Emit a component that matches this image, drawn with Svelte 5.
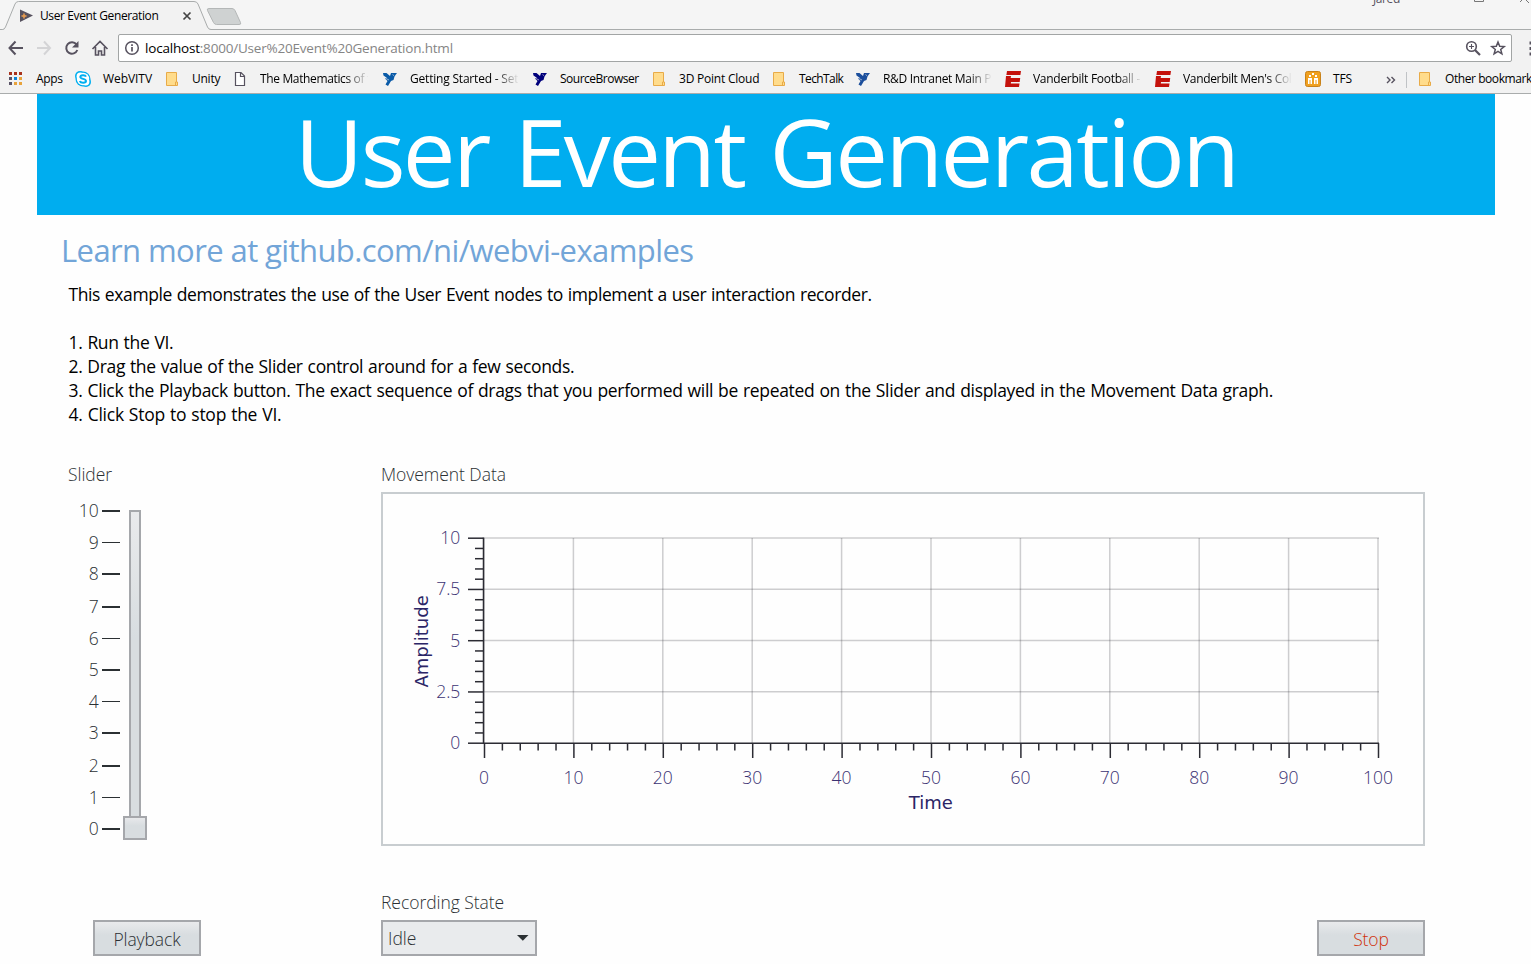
<script>
  const bookmarks = [
    { icon: 'apps', text: 'Apps', ls: -0.3 },
    { icon: 'skype', text: 'WebVITV', ls: -0.06 },
    { icon: 'folder', text: 'Unity', ls: -0.25 },
    { icon: 'doc', text: 'The Mathematics of f', fade: true, ls: -0.36 },
    { icon: 'ni', color: '#0a5ba8', text: 'Getting Started - Set', fade: true, ls: -0.2 },
    { icon: 'ni', color: '#00007c', text: 'SourceBrowser', ls: -0.5 },
    { icon: 'folder', text: '3D Point Cloud', ls: -0.22 },
    { icon: 'folder', text: 'TechTalk', ls: -0.6 },
    { icon: 'ni', color: '#1c4f9c', text: 'R&D Intranet Main P', fade: true, ls: -0.32 },
    { icon: 'espn', text: 'Vanderbilt Football -', fade: true, ls: -0.28 },
    { icon: 'espn', text: "Vanderbilt Men's Col", fade: true, ls: -0.33 },
    { icon: 'tfs', text: 'TFS', ls: -0.13 }
  ];
  const steps = [
    { t: 'This example demonstrates the use of the User Event nodes to implement a user interaction recorder.', ls: -0.4 },
    { t: '\u00a0', ls: -0.3 },
    { t: '1. Run the VI.', ls: -0.32 },
    { t: '2. Drag the value of the Slider control around for a few seconds.', ls: -0.34 },
    { t: '3. Click the Playback button. The exact sequence of drags that you performed will be repeated on the Slider and displayed in the Movement Data graph.', ls: -0.31 },
    { t: '4. Click Stop to stop the VI.', ls: -0.24 }
  ];
  const sliderTicks = [
    [10, 511, 2], [9, 542.5, 1], [8, 574, 2], [7, 607, 2], [6, 638.5, 1], [5, 670, 2],
    [4, 701.5, 1], [3, 733, 2], [2, 766, 2], [1, 797.5, 1], [0, 829, 2]
  ];
  const xs = Array.from({ length: 51 }, (_, i) => i);
  const ys = Array.from({ length: 21 }, (_, i) => i);
  const yLabels = ['0', '2.5', '5', '7.5', '10'];
</script>

{#snippet icon(kind, color)}
  <svg class="bicon" width="16" height="16" viewBox="0 0 16 16">
    {#if kind === 'apps'}
      {#each [['#a8321c', '#a8321c', '#a8321c'], ['#5a5468', '#0a84d8', '#e8a33c'], ['#5a5468', '#e8a33c', '#e8a33c']] as row, r}
        {#each row as c, i}<rect x={1 + i * 5} y={1 + r * 5} width="3" height="3" fill={c} />{/each}
      {/each}
    {:else if kind === 'skype'}
      <circle cx="5" cy="5" r="5" fill="#00aff0" /><circle cx="11" cy="11" r="5" fill="#00aff0" /><circle cx="8" cy="8" r="7.500" fill="#00aff0" />
      <circle cx="5.300" cy="5.300" r="3.700" fill="#fff" /><circle cx="10.700" cy="10.700" r="3.700" fill="#fff" /><circle cx="8" cy="8" r="6.200" fill="#fff" />
      <path d="M11 5.600C10.300 3.600 5.300 3.700 5.300 6c0 2.200 5.700 1.600 5.700 4 0 2.400-5.400 2.400-6.100 0" fill="none" stroke="#00aff0" stroke-width="2" />
    {:else if kind === 'folder'}
      <path d="M2.500 1.500h10v9.500h1v3.500h-11z" fill="#ffdc8c" stroke="#e8ab48" /><path d="M11.500 14v-3h1" fill="none" stroke="#e8ab48" />
    {:else if kind === 'doc'}
      <path d="M3.500 1.500h5.500l3.500 3.500v9.500h-9zM8.500 1.500v4h4" fill="#fff" stroke="#57525f" stroke-width="1.200" />
    {:else if kind === 'ni'}
      <path d="M1 2h3.500l3.500 3 1-3h6l-1.500 2-1 1.500-1 3.500-2.500 1-3 5-2.500-1.500 2-3.500-1.500-1.500-1-1 2-.5L1.500 4.500z" fill={color} /><path d="M10.500 3.500l1.500 1.200M4 7.500l3 1.500" stroke="#f2f2f2" stroke-width=".6" />
    {:else if kind === 'espn'}
      <path d="M2 0h14l-.6 4H1.400zM1 5h5l-.3 2h9.500l-.5 4H6l-.2 1.500h8.700L14 16H0z" fill="#c4120c" />
    {:else}
      <rect x=".5" y=".5" width="15" height="15" rx="2" fill="#f0a020" stroke="#c8821a" />
      <path d="M4 4h2v2H4zM10 4h2v2h-2zM7 2h2v2H7zM3 7h4v6H3zM9 7h4v6H9z" fill="#fff" /><path d="M5 9v4M11 9v4M7 5l1 1 1-1" stroke="#f0a020" fill="none" />
    {/if}
  </svg>
{/snippet}

<div class="window">
  <header class="tabs">
    <svg width="250" height="30" viewBox="0 0 250 30">
      <path d="M0 29.500H2.500Q4.500 29.500 5.500 27L15 4Q16 1.500 18.500 1.500H194Q197 1.500 198 4L207.500 27Q208.500 29.500 211 29.500H250V30H0z" fill="#f2f2f2" />
      <path d="M0 29.500H2.500Q4.500 29.500 5.500 27L15 4Q16 1.500 18.500 1.500H194Q197 1.500 198 4L207.500 27Q208.500 29.500 211 29.500H250" fill="none" stroke="#a9acac" />
      <path d="M209 8.500H232Q234 8.500 235 10.500L240.500 22.500Q241.500 24.500 239 24.500H216.500Q214.500 24.500 213.500 22.500L207.500 10.500Q206.500 8.500 209 8.500z" fill="#cfd2d2" stroke="#b4b7b7" />
      <path d="M20 9.500L33 15.500 20 22z" fill="#57525f" /><path d="M21.500 16h5M24 13.500v5" stroke="#f0a050" stroke-width="1.500" />
      <path d="M183.500 12.500l7 7m0-7l-7 7" stroke="#444" stroke-width="1.700" />
    </svg>
    <span class="tabtitle">User Event Generation</span>
    <span class="profile">Jared</span>
    <svg class="winctl" width="60" height="4" viewBox="0 0 60 4"><path d="M3.500 0v1.500h9V0M49 2l4-4 5 5" fill="none" stroke="#777" /></svg>
  </header>
  <div class="toolbar">
    <svg width="118" height="36" viewBox="0 30 118 36" fill="none" stroke="#57525f" stroke-width="2">
      <path d="M9.500 48H23M15.500 41.500L9.500 48l6 6.500" />
      <path d="M37 48h12.500M44 41.500l6 6.500-6 6.500" stroke="#d4d4d6" />
      <path d="M76.500 44.500A5.700 5.700 0 1 0 77.300 50" /><path d="M78.500 41v6.500H72z" fill="#57525f" stroke="none" />
      <path d="M92.500 49l7.500-7.500 7.500 7.500M95.500 47v8h3v-4h3v4h3v-8" stroke-width="1.600" />
    </svg>
    <div class="omni">
      <svg width="26" height="26" viewBox="0 0 26 26"><circle cx="13" cy="13" r="6.300" fill="none" stroke="#57525f" stroke-width="1.500" /><path d="M13 12v4.500M13 9.200v1.800" stroke="#57525f" stroke-width="1.700" /></svg>
      <span class="url"><b>localhost</b>:8000/User%20Event%20Generation.html</span>
      <svg class="end" width="49" height="26" viewBox="0 0 49 26" fill="none" stroke="#57525f" stroke-width="1.600">
        <circle cx="9.500" cy="11.500" r="4.800" /><path d="M13 15l5 5" stroke-width="2.200" /><path d="M7 11.500h5M9.500 9v5" stroke-width="1.100" />
        <path d="M36 7l1.700 4.200 4.500.3-3.500 2.900 1.200 4.400-3.900-2.400-3.900 2.400 1.200-4.400-3.500-2.900 4.500-.3z" stroke-width="1.500" />
      </svg>
    </div>
    <svg width="19" height="36" viewBox="0 0 19 36" fill="#57525f"><path d="M17.500 11.500h3v3h-3zM17.500 17h3v3h-3zM17.500 22.500h3v3h-3z" /></svg>
  </div>
  <nav class="bookmarks">
    {#each bookmarks as b}
      <span class="bm">{@render icon(b.icon, b.color)}<span class="txt" class:fade={b.fade} style:letter-spacing="{b.ls}px">{b.text}</span></span>
    {/each}
    <svg width="10" height="10" viewBox="0 0 10 10"><path d="M1 2l3 3-3 3M5.500 2l3 3-3 3" fill="none" stroke="#57525f" stroke-width="1.400" /></svg>
    <i class="sep"></i>
    <span class="bm">{@render icon('folder')}<span class="txt other">Other bookmarks</span></span>
  </nav>

  <main>
    <h1>User Event Generation</h1>
    <a class="learn" href="#top">Learn more at github.com/ni/webvi-examples</a>
    <div class="steps">{#each steps as s}<p style:letter-spacing="{s.ls}px">{s.t}</p>{/each}</div>
    <div class="panels">
      <section>
        <div class="label">Slider</div>
        <svg class="slider" width="92" height="348" viewBox="68 492 92 348">
          <defs>
            <linearGradient id="track" x1="0" y1="0" x2="0" y2="1"><stop offset="0" stop-color="#e9eaec" /><stop offset=".4" stop-color="#d8dde0" /></linearGradient>
          </defs>
          {#each sliderTicks as [v, y, h]}
            <text x="98.800" y={y + 6} text-anchor="end">{v}</text>
            <rect x="102" y={y - h / 2} width="18" height={h} fill="#2b3033" />
          {/each}
          <rect x="130" y="511" width="10" height="318" fill="url(#track)" stroke="#a5a7ab" stroke-width="2" />
          <rect x="124" y="817" width="22" height="22" fill="url(#track)" stroke="#a5a7ab" stroke-width="2" />
        </svg>
      </section>
      <section>
        <div class="label">Movement Data</div>
        <svg class="chart" width="1044" height="354" viewBox="381 492 1044 354">
          <rect x="382" y="493" width="1042" height="352" fill="#fefefe" stroke="#c8cdd0" stroke-width="2" />
          <g stroke="#32323c" stroke-opacity=".24" stroke-width="1.500">
            {#each xs.filter((i) => i % 5 === 0) as i}<path d="M{484 + i * 17.880} 538V743" />{/each}
            {#each [0, 1, 2, 3] as i}<path d="M484 {538 + i * 51.250}H1379" />{/each}
          </g>
          <g stroke="#2b2b33" stroke-width="1.500">
            {#each xs as i}<path d="M{484.500 + i * 17.880} 743V{i % 5 ? 750.500 : 758}" />{/each}
            {#each ys as i}<path d="M483.500 {538.200 + i * 10.250}H{i % 5 ? 475 : 468}" />{/each}
            <path d="M483.500 537.500V744M483 743.300H1379" />
          </g>
          <g class="nums">
            {#each yLabels as l, i}<text x="460.300" y={749 - i * 51.250} text-anchor="end">{l}</text>{/each}
            {#each Array(11) as _, i}<text x={484 + i * 89.400} y="784" text-anchor="middle">{i * 10}</text>{/each}
          </g>
          <text class="axis" x="908.700" y="809">Time</text>
          <text class="axis" transform="translate(428 687.500) rotate(-90)">Amplitude</text>
        </svg>
      </section>
    </div>
    <footer>
      <button class="play">Playback</button>
      <div class="state">
        <div class="label">Recording State</div>
        <div class="select"><span>Idle</span><svg width="12" height="6" viewBox="0 0 12 6"><path d="M0 0h11.500L5.800 5.800z" fill="#2b3033" /></svg></div>
      </div>
      <button class="stop">Stop</button>
    </footer>
  </main>
</div>

<style>
  :global(body) { background: #fefefe; overflow: hidden; }
  .window { width: 1531px; height: 964px; overflow: hidden; font-family: 'Open Sans', 'Noto Sans', sans-serif; font-size: 12px; color: #000; }
  svg { display: block; flex: none; }
  .tabs { height: 30px; display: grid; grid-template-columns: 250px 1123px 98px 60px; background: linear-gradient(#f5f5f5 29px, #a9acac 29px); position: relative; }
  .tabtitle { position: absolute; left: 40px; top: 8px; line-height: 16px; white-space: nowrap; letter-spacing: -.38px; }
  .profile { grid-column: 3; margin-top: -9px; line-height: 16px; height: 16px; color: #57525f; letter-spacing: -.4px; }
  .winctl { grid-column: 4; }
  .toolbar { height: 36px; display: flex; background: #f2f2f2; }
  .omni { width: 1392px; height: 26px; margin-top: 4px; border: 1px solid #a2a5a5; border-radius: 2px; background: #fff; display: flex; align-items: center; }
  .url { font-size: 13.500px; line-height: 20px; color: #858585; white-space: nowrap; letter-spacing: -.2px; }
  .url b { font-weight: 400; color: #000; }
  .end { margin-left: auto; }
  .bookmarks { height: 27px; border-bottom: 1px solid #a9acac; background: #f2f2f2; padding-left: 8px; display: grid; align-items: center; grid-template-columns: 67px 89px 68px 150px 150px 119px 120px 84px 150px 150px 150px 81px 20px 11px 130px; }
  .bm { display: flex; align-items: center; gap: 12px; line-height: 16px; white-space: nowrap; }
  .bicon { margin-top: -1px; }
  .txt { margin-top: -2px; }
  .other { letter-spacing: -.43px; }
  .fade { width: 108px; overflow: hidden; mask-image: linear-gradient(90deg, #000 85px, transparent 109px); }
  .sep { width: 1px; height: 16px; background: #c0c3c6; }
  h1 { margin: 0 36px 0 37px; height: 121px; background: #00adef; color: #fff; font-size: 94px; font-weight: 400; line-height: 114px; text-align: center; white-space: nowrap; letter-spacing: -2.600px; word-spacing: 3.500px; }
  .learn { display: block; margin: 13px 0 0 61px; font-size: 31px; line-height: 44px; color: #72a5d8; text-decoration: none; white-space: nowrap; letter-spacing: -.59px; }
  .steps { margin: 10px 0 0 68.500px; font-size: 17.500px; line-height: 24px; white-space: nowrap; word-spacing: .7px; }
  .steps p { margin: 0; }
  .panels { display: grid; grid-template-columns: 313px 1044px; margin: 36px 0 0 68px; }
  .label { height: 30px; line-height: 24px; font-size: 17.500px; font-weight: 350; color: #2b3033; white-space: nowrap; letter-spacing: -.05px; }
  .slider text { font-size: 17.500px; font-weight: 350; fill: #2b3033; }
  .nums { font-size: 17.500px; font-weight: 350; fill: #3b3273; }
  .axis { font-family: 'DejaVu Sans', sans-serif; font-size: 18px; fill: #2b2566; }
  footer { display: grid; grid-template-columns: 288px 936px 108px; margin: 44px 0 0 93px; align-items: end; }
  button { width: 108px; height: 36px; padding: 2px 0 0; border: 2px solid #a5a7ab; background: linear-gradient(#e9eaec, #d8dde0 40%); font: 350 17.500px/28px 'Open Sans', sans-serif; letter-spacing: -.1px; color: #2b3033; }
  .stop { color: #d03008; }
  .select { width: 156px; height: 36px; box-sizing: border-box; border: 2px solid #a5a7ab; background: #e9ebed; display: flex; align-items: center; justify-content: space-between; padding: 0 6px 0 5px; font-size: 17.500px; font-weight: 350; color: #2b3033; }
</style>
